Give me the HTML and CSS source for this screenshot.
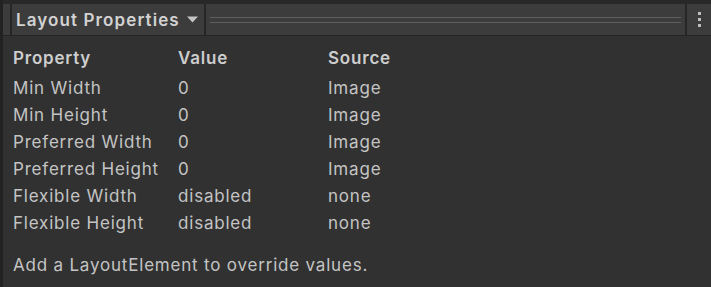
FILE: index.html
```html
<!DOCTYPE html>
<html>
<head>
<meta charset="utf-8">
<link rel="stylesheet" href="styles.css">
</head>
<body>
<div class="frame">
  <div class="edge"></div>
  <div class="panel">
    <div class="topstrip"></div>
    <div class="header">
      <div class="lead"></div>
      <div class="vsep"></div>
      <div class="title">Layout Properties</div>
      <svg class="caret" width="11" height="7" viewBox="0 0 11 7"><path d="M0 0.5 H11 L5.5 6.5 Z" fill="#c4c4c4"/></svg>
      <div class="vsep sep2"></div>
      <div class="grip"><div class="gline"></div><div class="gline"></div></div>
      <div class="vsep sep3"></div>
      <div class="menu"><span class="dot"></span><span class="dot"></span><span class="dot"></span></div>
    </div>
    <div class="body">
      <div class="row head"><span class="c1">Property</span><span class="c2">Value</span><span class="c3">Source</span></div>
      <div class="row"><span class="c1">Min Width</span><span class="c2">0</span><span class="c3">Image</span></div>
      <div class="row"><span class="c1">Min Height</span><span class="c2">0</span><span class="c3">Image</span></div>
      <div class="row"><span class="c1">Preferred Width</span><span class="c2">0</span><span class="c3">Image</span></div>
      <div class="row"><span class="c1">Preferred Height</span><span class="c2">0</span><span class="c3">Image</span></div>
      <div class="row"><span class="c1">Flexible Width</span><span class="c2">disabled</span><span class="c3">none</span></div>
      <div class="row"><span class="c1">Flexible Height</span><span class="c2">disabled</span><span class="c3">none</span></div>
      <div class="note">Add a LayoutElement to override values.</div>
    </div>
  </div>
</div>
</body>
</html>
```
FILE: styles.css
```css
html, body {
  margin: 0;
  padding: 0;
  background: #313131;
  width: 711px;
  height: 287px;
  overflow: hidden;
  font-family: Inter, "Noto Sans", sans-serif;
  font-size: 17px;
  letter-spacing: 0.8px;
  color: #c4c4c4;
}
.frame {
  display: flex;
  height: 287px;
}
.edge {
  width: 3px;
  background: #222222;
  flex: none;
}
.panel {
  flex: 1;
  display: flex;
  flex-direction: column;
}
.topstrip {
  height: 4px;
  background: #282828;
}
.header {
  height: 31px;
  background: #3c3c3c;
  border-bottom: 1px solid #242424;
  display: flex;
  align-items: center;
}
.lead {
  width: 7px;
  flex: none;
}
.vsep {
  width: 2px;
  align-self: stretch;
  background: #262626;
  flex: none;
}
.title {
  margin-left: 4px;
  font-weight: 600;
  letter-spacing: 1.1px;
  color: #d2d2d2;
  white-space: nowrap;
}
.caret {
  margin-left: 7px;
  flex: none;
}
.sep2 {
  margin-left: 6px;
  width: 2px;
}
.grip {
  flex: 1;
  margin-left: 4px;
  margin-right: 4px;
  display: flex;
  flex-direction: column;
  gap: 4px;
}
.gline {
  height: 1px;
  background: #5e5e5e;
}
.menu {
  width: 24px;
  display: flex;
  flex-direction: column;
  align-items: center;
  gap: 3px;
}
.dot {
  width: 3px;
  height: 3px;
  background: #bdbdbd;
  display: block;
}
.body {
  padding: 9px 0 0 10px;
}
.row {
  display: flex;
  height: 27px;
  line-height: 27px;
  white-space: nowrap;
}
.row.head {
  font-weight: 600;
  margin-bottom: 3px;
  color: #cdcdcd;
}
.c1 { width: 165px; }
.c2 { width: 150px; }
.c3 { width: 150px; }
.note {
  margin-top: 15px;
  line-height: 27px;
  white-space: nowrap;
}
```
